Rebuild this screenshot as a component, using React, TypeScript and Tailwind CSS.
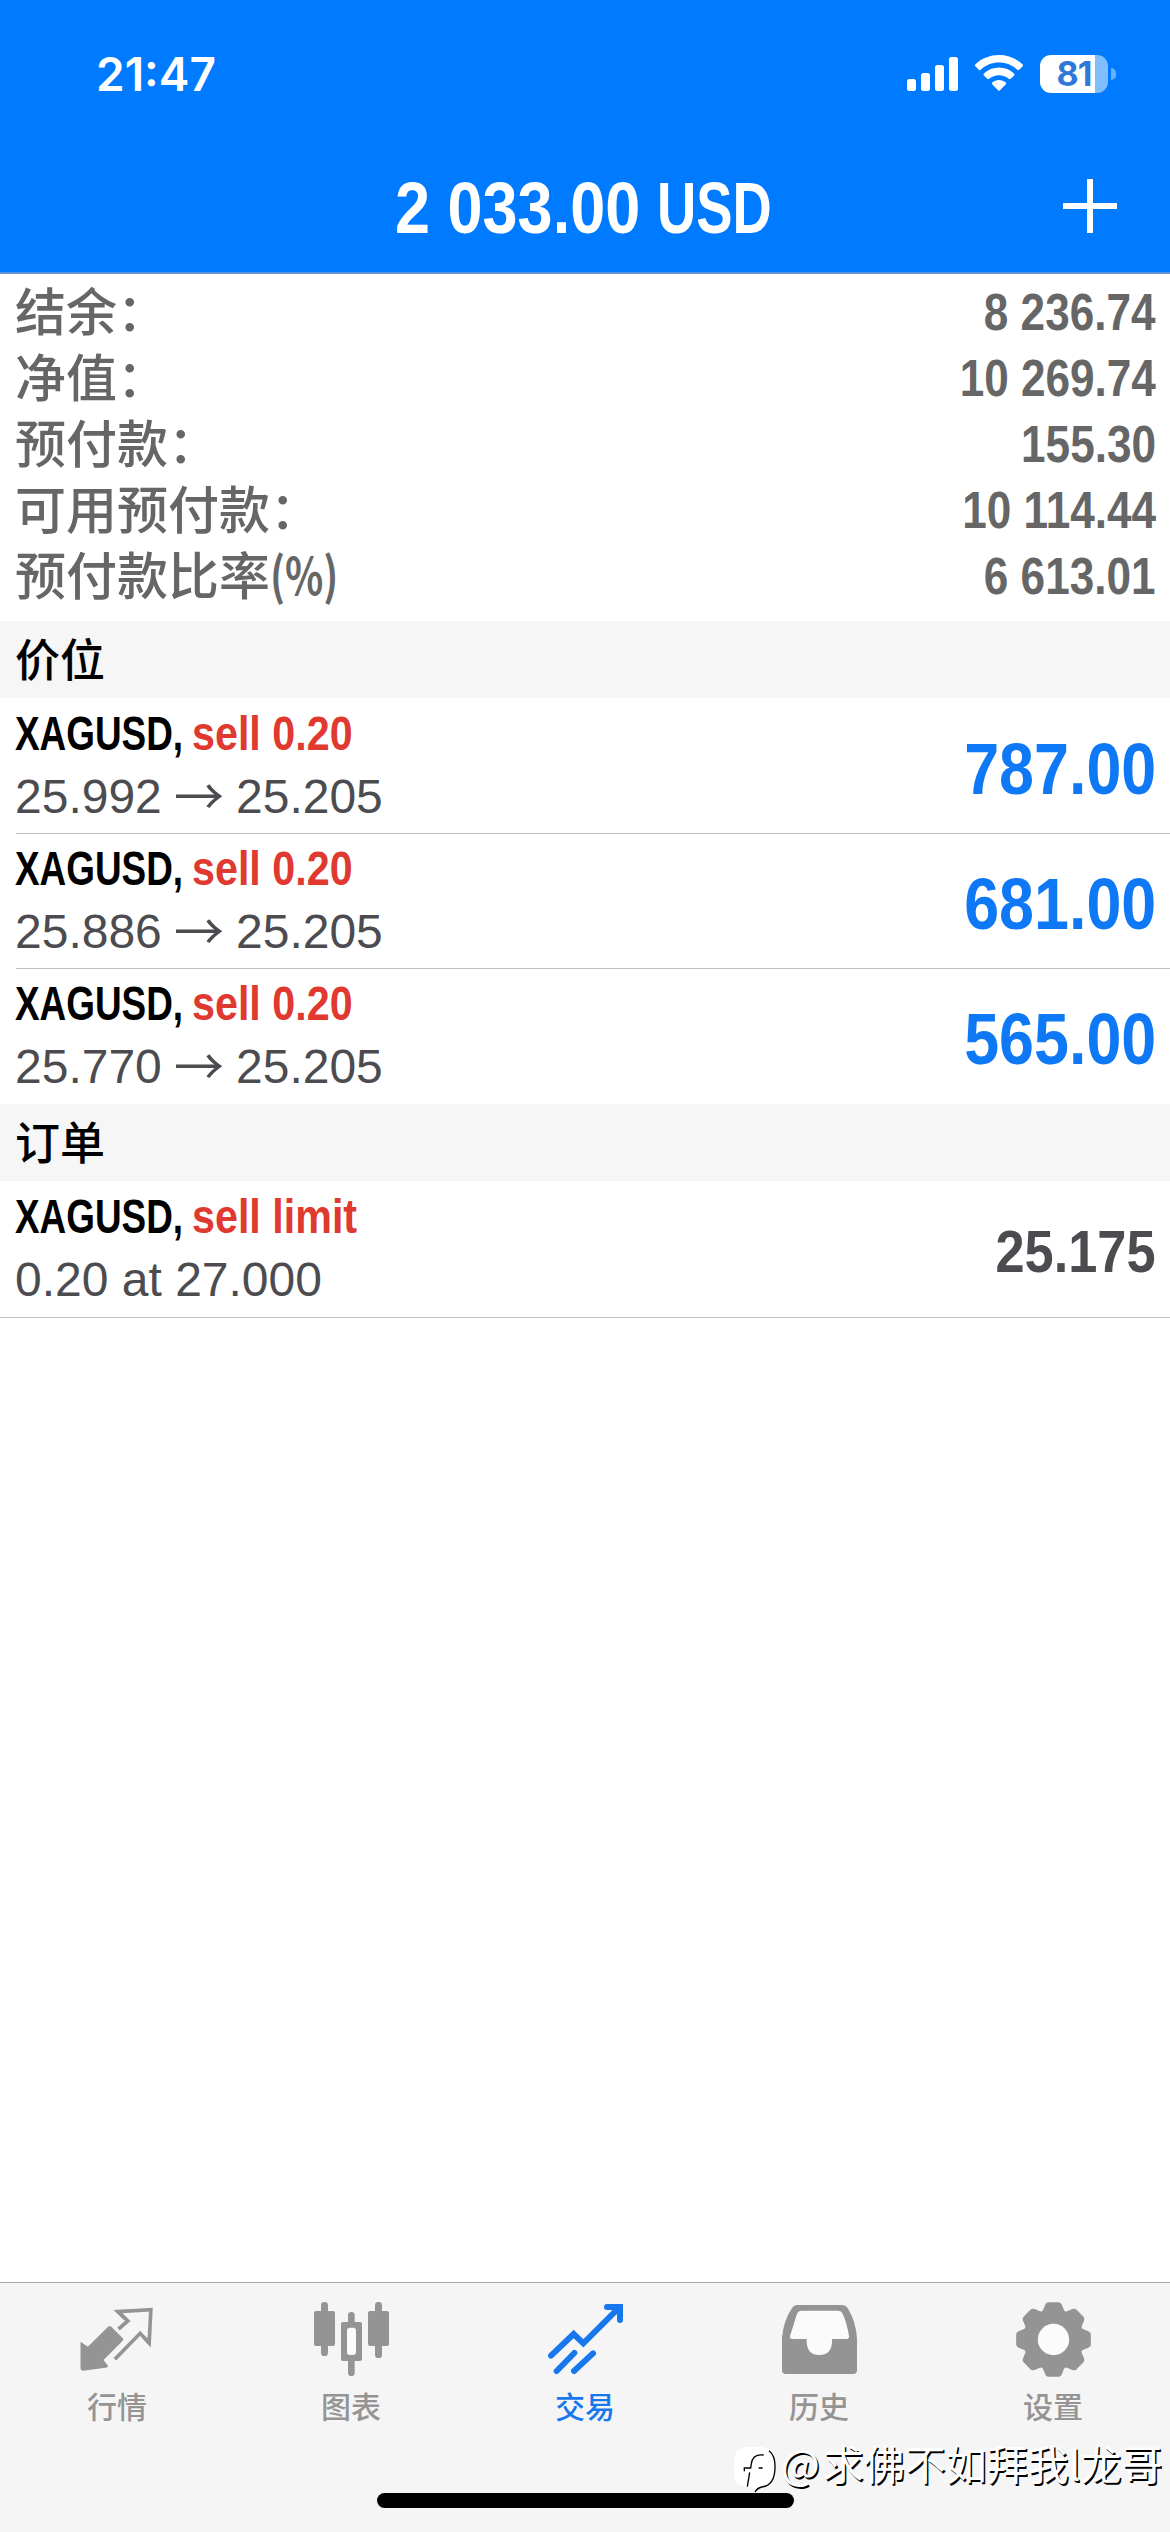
import { FC, ReactNode } from 'react';

interface Trade {
  symbol: string;
  side: string;
  detail: ReactNode;
  value: string;
}

// Labels end with a full-width colon
const COLON = '\uff1a';

const BALANCE = [
  { label: '结余', suffix: COLON, value: '8 236.74' },
  { label: '净值', suffix: COLON, value: '10 269.74' },
  { label: '预付款', suffix: COLON, value: '155.30' },
  { label: '可用预付款', suffix: COLON, value: '10 114.44' },
  { label: '预付款比率', suffix: '(%)', value: '6 613.01' },
];

const PriceMove: FC<{ from: string; to: string }> = ({ from, to }) => (
  <span className="flex">
    <span className="w-[147px]">{from}</span>
    <span className="-mt-[3px] w-[74px] text-center font-['Noto_Sans_CJK_SC',sans-serif] text-[50px]">→</span>
    <span>{to}</span>
  </span>
);

const POSITIONS: Trade[] = [
  { symbol: 'XAGUSD,', side: 'sell 0.20', detail: <PriceMove from="25.992" to="25.205" />, value: '787.00' },
  { symbol: 'XAGUSD,', side: 'sell 0.20', detail: <PriceMove from="25.886" to="25.205" />, value: '681.00' },
  { symbol: 'XAGUSD,', side: 'sell 0.20', detail: <PriceMove from="25.770" to="25.205" />, value: '565.00' },
];

const ORDER: Trade = { symbol: 'XAGUSD,', side: 'sell limit', detail: '0.20 at 27.000', value: '25.175' };

const StatusBar = () => (
  <div className="flex h-[148px] items-center pl-[96px] pr-[54px] text-white">
    <span className="font-['Inter',sans-serif] text-[46px] font-semibold leading-none">21:47</span>
    <div className="ml-auto flex items-center">
      <svg width="52" height="38" viewBox="0 0 52 38" fill="currentColor">
        <rect x="0" y="24" width="9" height="12" rx="2.5" />
        <rect x="14" y="18" width="9" height="18" rx="2.5" />
        <rect x="28" y="10" width="9" height="26" rx="2.5" />
        <rect x="42" y="2" width="9" height="34" rx="2.5" />
      </svg>
      <svg className="ml-4" width="48" height="38" viewBox="0 0 48 38" fill="currentColor">
        <path d="M24 0C33 0 41.5 3.400 47.500 9.300Q48.600 10.400 47.500 11.500L44.200 14.700Q43.200 15.600 42.200 14.700C37.300 10.200 31 7.600 24 7.600S10.700 10.200 5.800 14.700Q4.800 15.600 3.800 14.700L.5 11.500Q-.6 10.400.5 9.300C6.500 3.400 15 0 24 0Z" />
        <path d="M24 12.600C29.800 12.600 35.100 14.800 39.100 18.500Q40.100 19.500 39.100 20.500L35.700 23.800Q34.700 24.600 33.700 23.800C31.100 21.500 27.700 20.200 24 20.200S16.900 21.500 14.300 23.800Q13.300 24.600 12.300 23.800L8.900 20.500Q7.900 19.500 8.900 18.500C12.900 14.800 18.200 12.600 24 12.600Z" />
        <path d="M24 25C26.600 25 29 25.900 30.800 27.400Q31.800 28.300 30.800 29.300L25 35.300Q24 36.300 23 35.300L17.200 29.300Q16.200 28.300 17.200 27.400C19 25.900 21.400 25 24 25Z" />
      </svg>
      <div className="ml-[17px] flex h-[38px] w-[68px] items-center justify-center rounded-[11px] bg-[linear-gradient(to_right,#fff_81%,#80bdff_81%)]">
        <span className="font-['Inter',sans-serif] text-[34px] font-bold leading-none tracking-tight text-[#2f78d8]">81</span>
      </div>
      <div className="ml-[3px] h-3 w-[5px] rounded-r-full bg-[#66b0ff]" />
    </div>
  </div>
);

const SectionHeader: FC<{ title: string }> = ({ title }) => (
  <div className="flex h-[77px] items-center bg-[#f6f6f6] pb-[5px] pl-[15px] font-['Noto_Sans_CJK_SC',sans-serif] text-[45px] font-medium leading-none text-black">
    {title}
  </div>
);

const TradeRow: FC<{ trade: Trade; valueClass: string }> = ({ trade, valueClass }) => (
  <div className="flex h-[134px] justify-between pl-[15px] pr-[14px]">
    <div className="pt-[3px]">
      <div className="flex h-[63px] whitespace-nowrap text-[49px] font-bold leading-[63px]">
        <span className="w-[177px] origin-left scale-x-[0.753] text-black">{trade.symbol}</span>
        <span className="origin-left scale-x-[0.842] text-[#e0392f]">{trade.side}</span>
      </div>
      <div className="h-[63px] text-[48px] leading-[63px] text-[#4c4c50]">{trade.detail}</div>
    </div>
    <span className={`origin-right scale-x-[0.872] pt-1 font-bold leading-[132px] ${valueClass}`}>{trade.value}</span>
  </div>
);

const QuotesIcon = () => (
  <svg width="75" height="75" viewBox="238.5 96 225 225">
    <path
      fill="currentColor"
      d="M240 215L262 230L323 170Q328 166 333 171L367 205Q370 209 366 213L309 270L323 288Q321 293 315 293L248 302Q240 302 240 295Z"
    />
    <path fill="none" stroke="currentColor" strokeWidth="11" d="M354 177L382 153L352 125L451 119L446 219L419 190L343 268" />
    <path fill="none" stroke="currentColor" strokeWidth="10" strokeLinejoin="round" d="M375 147L352 125L375 124M446 200L446 219L430 202" />
  </svg>
);

const ChartIcon = () => (
  <svg width="75" height="75" viewBox="939 96 225 225" fill="currentColor">
    <rect x="960" y="96" width="21" height="162" rx="10" />
    <rect x="939" y="123" width="63" height="105" rx="6" />
    <rect x="1041" y="126" width="20" height="192" rx="10" />
    <rect x="1020" y="156" width="63" height="117" rx="6" />
    <rect x="1038" y="173" width="27" height="82" rx="9" fill="#fbfbfb" />
    <rect x="1122" y="96" width="21" height="168" rx="10" />
    <rect x="1101" y="123" width="63" height="105" rx="6" />
  </svg>
);

const TradeIcon = () => (
  <svg width="75" height="75" viewBox="441 96 225 225" fill="none" stroke="currentColor" strokeWidth="18" strokeLinecap="round">
    <path d="M450 257L518 192L547 220L655 112" />
    <path d="M618 111H657V150" />
    <path d="M467 303L520 249M519 303L576 250" />
  </svg>
);

const HistoryIcon = () => (
  <svg width="75" height="75" viewBox="183 96 225 225">
    <path
      fill="currentColor"
      d="M228 105H364Q374 105 380 114Q405 155 408 205V300Q408 312 396 312H195Q183 312 183 300V205Q186 155 213 114Q219 105 228 105Z"
    />
    <path
      fill="#fbfbfb"
      d="M240 122H350Q361 122 365 131Q378 160 384 198Q385 207 377 207H333V216Q331 255 295 255Q259 255 257 216V207H214Q206 207 207 198L228 131Q232 122 240 122Z"
    />
  </svg>
);

const SettingsIcon = () => (
  <svg width="75" height="75" viewBox="-112.500 -112.500 225 225" fill="currentColor">
    <circle r="89" />
    {[0, 45, 90, 135, 180, 225, 270, 315].map((angle) => (
      <path key={angle} transform={`rotate(${angle})`} d="M-38 -80Q-31 -86 -27 -99Q-23 -112 -15 -112H15Q23 -112 27 -99Q31 -86 38 -80Z" />
    ))}
    <circle r="47" fill="#fbfbfb" />
  </svg>
);

const TABS = [
  { label: '行情', icon: <QuotesIcon /> },
  { label: '图表', icon: <ChartIcon /> },
  { label: '交易', icon: <TradeIcon />, active: true },
  { label: '历史', icon: <HistoryIcon /> },
  { label: '设置', icon: <SettingsIcon /> },
];

const TabBar = () => (
  <nav className="relative mt-auto h-[250px] border-t border-[#a9a9ab] bg-[#f5f5f5]">
    <div className="grid grid-cols-5 pt-[19px]">
      {TABS.map((tab) => (
        <div key={tab.label} className={`flex flex-col items-center ${tab.active ? 'text-[#1778ee]' : 'text-[#949494]'}`}>
          {tab.icon}
          <span className="mt-[11px] font-['Noto_Sans_CJK_SC',sans-serif] text-[30px] font-medium leading-[34px]">{tab.label}</span>
        </div>
      ))}
    </div>

    {/* Home indicator */}
    <div className="absolute bottom-6 left-[377px] h-[15px] w-[417px] rounded-full bg-black" />

    {/* Author signature */}
    <div className="absolute left-[734px] top-[155px] flex items-start whitespace-nowrap text-white">
      <svg className="mt-[9px]" width="44" height="48" viewBox="1000 530 132 144" fill="none" stroke="#000" strokeWidth="4">
        <path
          fill="#fff"
          stroke="none"
          d="M1040 530H1085Q1124 540 1124 580V600Q1122 645 1085 648Q1070 652 1062 664L1058 650H1038Q1000 646 1000 608V570Q1002 534 1040 530Z"
        />
        <path d="M1105 541Q1124 556 1123 590Q1123 645 1083 650Q1070 653 1063 665" />
        <path d="M1089 554Q1056 550 1052 580L1050 593H1031V603M1047 606L1040 649M1074 593H1086" />
      </svg>
      <span className="ml-[3px] font-['Noto_Sans_CJK_SC',sans-serif] text-[41px] leading-[48px] [text-shadow:1.500px_1.500px_0_#000]">
        <span className="mr-[3px]">@</span>求佛不如拜我l龙哥
      </span>
    </div>
  </nav>
);

const App: FC = () => {
  return (
    <div className="flex h-[2532px] w-[1170px] flex-col overflow-hidden bg-white font-['Liberation_Sans',Arial,sans-serif]">
      <header className="h-[274px] border-b-2 border-[#5b93d6] bg-[#007aff]">
        <StatusBar />
        <div className="grid h-[120px] grid-cols-[1fr_auto_1fr] items-center text-white">
          <h1 className="col-start-2 flex whitespace-nowrap text-[72px] font-bold leading-none">
            <span className="w-[262px] origin-left scale-x-[0.875]">2 033.00</span>
            <span className="w-[118px] origin-left scale-x-[0.755]">USD</span>
          </h1>
          <svg className="mb-1 mr-[53px] justify-self-end" width="54" height="54" viewBox="0 0 54 54" stroke="currentColor" strokeWidth="6">
            <path d="M27 0V54M0 27H54" />
          </svg>
        </div>
      </header>

      {/* Account summary */}
      <div className="pb-3 pl-[15px] pr-[14px] pt-[5px] text-[51px] text-[#666]">
        {BALANCE.map((row) => (
          <div key={row.label} className="flex h-[66px] items-center justify-between whitespace-nowrap leading-[66px]">
            <span className="pb-[7px] font-['Noto_Sans_CJK_SC',sans-serif] font-medium">
              {row.label}
              {row.suffix === COLON ? COLON : <span className="inline-block origin-left scale-x-[0.78] font-bold">{row.suffix}</span>}
            </span>
            <span className="origin-right scale-x-[0.865] pt-px font-bold">{row.value}</span>
          </div>
        ))}
      </div>

      <SectionHeader title="价位" />
      <div className="pt-px">
        {POSITIONS.map((trade, i) => (
          <div key={trade.value}>
            <TradeRow trade={trade} valueClass="text-[72px] text-[#0f78f5]" />
            {i < POSITIONS.length - 1 ? <div className="ml-4 h-px bg-[#bebec1]" /> : <div className="h-px" />}
          </div>
        ))}
      </div>

      <SectionHeader title="订单" />
      <div className="border-b border-[#c4c4c7] pb-px pt-px">
        <TradeRow trade={ORDER} valueClass="text-[60px] text-[#4c4c50]" />
      </div>

      <TabBar />
    </div>
  );
};

export default App;
